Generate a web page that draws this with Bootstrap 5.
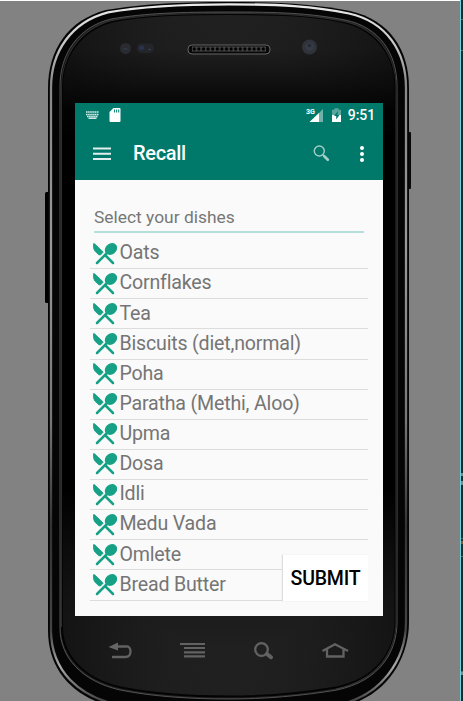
<!DOCTYPE html>
<html lang="en">
<head>
<meta charset="utf-8">
<meta name="viewport" content="width=device-width, initial-scale=1">
<title>Recall</title>
<link href="https://cdn.jsdelivr.net/npm/bootstrap@5.3.0/dist/css/bootstrap.min.css" rel="stylesheet">
<style>
body{background:#828282;font-family:Roboto,"Liberation Sans",sans-serif;width:463px;height:701px}
.stage{width:463px;height:701px;border-top:1px solid #fff}
.phone-art{position:absolute;left:0;top:-1px;z-index:0}
.earpiece{height:102px}
.screen{width:308px;height:513px;margin-left:75px;background:#fafafa}
.topbar{background:#00796b;height:77px;color:#fff}
.statusbar{height:24px;padding:0 8px 0 11px}
.clock{font-size:14px;font-weight:500;line-height:24px;letter-spacing:-.1px;margin-left:7px}
.actions{height:53px;padding:0 14px 0 18px}
.app-title{font-size:20px;font-weight:500;line-height:53px;margin-left:22px;letter-spacing:-.3px}
.search-glyph{margin-right:25px}
.prompt{margin:25px 19px 0;height:28px;border-bottom:2px solid #b5dfd9;font-size:17.4px;line-height:25px;color:#777;white-space:nowrap}
.dishes{margin:6px 15px 0;padding:0}
.dish{height:30.13px;border-bottom:1.5px solid #dcdcdc;padding-left:3px;font-size:19.6px;letter-spacing:-.18px;line-height:28px;color:#757575;white-space:nowrap}
.dish svg{margin-right:2.4px;flex:none}
.dish span{padding-bottom:.4px}
.submit-btn{position:absolute;left:208px;top:452px;width:85px;height:46px;background:#fff;border:0;border-radius:0;color:#000;font-size:19.5px;letter-spacing:-.2px;font-weight:500;padding:1px 0 0;line-height:46px;box-shadow:-1px 0 1px #ddd}
.keys{height:84px;padding:25px 0 0 108px}
</style>
<script src="https://cdn.jsdelivr.net/npm/bootstrap@5.3.0/dist/js/bootstrap.bundle.min.js"></script>
</head>
<body class="m-0 overflow-hidden">
<svg width="0" height="0" class="position-absolute"><defs>
<symbol id="utensils" viewBox="0 0 24 22"><g fill="#16a085" stroke="#16a085"><path d="M4 20 15.500 8.500" stroke-width="2.500" stroke-linecap="round"/><path d="M12.500 12.500 20 20" stroke-width="2.500" stroke-linecap="round"/><path d="M.400.800Q1 .400 1.600.800L10.200 9 7.500 12 5.800 11.800 1.600 7.800Q-.200 4.500.400.800Z" stroke-width=".800"/><ellipse cx="18" cy="6" rx="6.600" ry="5.400" transform="rotate(-38 18 6)" stroke="none"/></g></symbol>
</defs></svg>
<main class="stage position-relative">
<svg class="phone-art" width="463" height="701" viewBox="0 0 463 701">
<defs>
<linearGradient id="rim" x1="0" y1="0" x2="0" y2="701" gradientUnits="userSpaceOnUse"><stop offset="0" stop-color="#eee"/><stop offset=".06" stop-color="#c8c8c8"/><stop offset=".12" stop-color="#888"/><stop offset=".35" stop-color="#999"/><stop offset=".6" stop-color="#777"/><stop offset=".75" stop-color="#333"/><stop offset=".9" stop-color="#444"/><stop offset=".95" stop-color="#aaa"/><stop offset="1" stop-color="#444"/></linearGradient>
<linearGradient id="face" x1="0" y1="0" x2="0" y2="701" gradientUnits="userSpaceOnUse"><stop offset="0" stop-color="#272727"/><stop offset=".07" stop-color="#1f1f1f"/><stop offset=".16" stop-color="#030303"/><stop offset=".2" stop-color="#000"/><stop offset=".7" stop-color="#000"/><stop offset=".88" stop-color="#1c1c1c"/><stop offset="1" stop-color="#262626"/></linearGradient>
<radialGradient id="vig" cx="229" cy="350" r="400" gradientUnits="userSpaceOnUse" gradientTransform="translate(229 0) scale(.6 1) translate(-229 0)"><stop offset=".75" stop-color="#000" stop-opacity="0"/><stop offset="1" stop-color="#000" stop-opacity=".35"/></radialGradient>
<pattern id="mesh" x="192" y="46.500" width="4.600" height="5" patternUnits="userSpaceOnUse"><rect width="4.600" height="5" fill="#484848"/><circle cx="2.300" cy="2.500" r="1.700" fill="#000"/></pattern>
</defs>
<rect x="45" y="192" width="6" height="111" rx="1.500" fill="#000"/><rect x="407" y="132" width="4" height="57" rx="1" fill="#0a0a0a"/>
<path d="M48 630V88C48 50 68 20 106 10C142 4 180 2 229 2S315 4 350 11C390 20 409 50 409 88V622C409 660 385 701 332 709H124C75 701 48 672 48 630Z" fill="#050505"/>
<path d="M51 630V88C51 52 71 22 108 12.300C144 6 180 4.300 229 4.300S314 6 349 13.500C387 22 406 52 406 88V622C406 658 383 698 332 706H124C78 698 51 670 51 630Z" fill="none" stroke="url(#rim)" stroke-width="2.300"/>
<path d="M60 628V86C60 54 78 27 111 19C146 13 181 12 229 12S310 13 345 20C380 27 397 54 397 86V622C397 653 379 681 337 690C301 696 264 699 229 699S155 697 120 690C81 681 60 657 60 628Z" fill="url(#face)" stroke="#515151" stroke-width="1"/>
<path d="M62 627V87C62 56 81 30 112 21.500C147 15 181 14 229 14S309 15 343 22C376 29 395.500 56 395.500 87V621C395.500 651 377 679 336 687.500C301 693.500 264 696.500 229 696.500S156 694.500 121 687.500C83 679 62 655 62 627Z" fill="url(#vig)" stroke="#030303" stroke-width="2"/>
<path d="M61.500 627V87C61.500 56 80 29 112 20.500C147 14.500 181 13.500 229 13.500S309 14.500 344 21.500C377 28.500 396 56 396 87V621C396 651 378 680 336 689" fill="none" stroke="#4a4a4a" stroke-width=".6"/>
<circle cx="125.500" cy="48.500" r="5.500" fill="#2a2b31"/><rect x="137" y="43.500" width="17" height="9.500" rx="4.500" fill="#24252b"/><rect x="139" y="45.500" width="5" height="4.500" rx="1.500" fill="#28334a"/><path d="M148 49.500h3M123.500 49h4" stroke="#394052"/>
<rect x="188" y="45" width="82" height="9" rx="4" fill="#090909" stroke="#666" stroke-width="1"/><rect x="192" y="46.500" width="74" height="5" fill="url(#mesh)"/>
<circle cx="309.500" cy="47" r="7.500" fill="#30333a"/><circle cx="309.500" cy="46.500" r="4.300" fill="#373b46"/><circle cx="309.500" cy="45.500" r="1.800" fill="#252a34"/>
<path d="M461 0h2v701h-2z" fill="#20282a"/><path d="M460 0h1v701h-1z" fill="#6fd3db"/><path d="M461 19.500h2M461 50.500h2M461 538.500h2M461 556.500h2M461 671.500h2" stroke="#55605f"/><path d="M461 473h2v3h-2zM461 481h2v4h-2zM461 672h2v3h-2z" fill="#7e898a"/><path d="M461 541h2v3h-2z" fill="#8d5337"/>
</svg>
<div class="earpiece"></div>
<section class="screen position-relative overflow-hidden">
<header class="topbar">
<div class="statusbar d-flex align-items-center">
<svg width="13" height="8" viewBox="0 0 13 8"><path d="M0 1h13M0 3.500h13M1 5.500h11" stroke="#d9ebe8" stroke-width="1.700" stroke-dasharray="1.600 .5"/><path d="M2.500 7.200h8" stroke="#e8f3f1" stroke-width="1.400"/></svg>
<svg class="ms-2" width="16" height="16" viewBox="0 0 16 16"><path d="M6.500 1h6q1 0 1 1v12q0 1-1 1h-9q-1 0-1-1V5Z" fill="#fff"/><path d="M7.500 2.500v3M9.600 2.500v3M11.700 2.500v3" stroke="#16897b" stroke-width="1.100"/></svg>
<div class="ms-auto d-flex align-items-center">
<svg width="18" height="16" viewBox="0 0 18 16"><path d="M17 2v13H4Z" fill="#70b2aa"/><path d="M13 6v9H3.500Z" fill="#fff"/><text x="0" y="6.800" fill="#fff" font-size="7.500" font-weight="700" textLength="9" lengthAdjust="spacingAndGlyphs">3G</text></svg>
<svg class="ms-2" width="9" height="14" viewBox="0 0 9 14"><path d="M0 1.800h2.500V.200h4v1.600H9V8H0Z" fill="#59a69c"/><path d="M0 7h9v7H0Z" fill="#fff"/><path d="M6 3 2 8h2.200v3.500L7.500 7H5.300Z" fill="#00796b"/></svg>
<span class="clock">9:51</span></div>
</div>
<div class="actions d-flex align-items-center">
<svg width="18" height="14" viewBox="0 0 18 14"><path d="M0 1.500h18M0 6.800h18M0 12h18" stroke="#e2efee" stroke-width="2"/></svg>
<span class="app-title">Recall</span>
<svg class="ms-auto search-glyph" width="17" height="17" viewBox="0 0 17 17" fill="none" stroke="#a3cec8"><circle cx="6.300" cy="6" r="5" stroke-width="1.400"/><path d="m9.800 9.800 1.500 1.500" stroke-width="1.500"/><path d="m11.300 11.300 3.500 3.500" stroke-width="2.700" stroke-linecap="round"/></svg>
<svg class="menu-glyph" width="14" height="18" viewBox="0 0 14 18" fill="#fff"><circle cx="7" cy="3" r="2"/><circle cx="7" cy="9" r="2"/><circle cx="7" cy="15" r="2"/></svg>
</div>
</header>
<div class="prompt">Select your dishes</div>
<ul class="dishes list-unstyled">
<li class="dish d-flex align-items-center"><svg width="24" height="22"><use href="#utensils"/></svg><span>Oats</span></li>
<li class="dish d-flex align-items-center"><svg width="24" height="22"><use href="#utensils"/></svg><span>Cornflakes</span></li>
<li class="dish d-flex align-items-center"><svg width="24" height="22"><use href="#utensils"/></svg><span>Tea</span></li>
<li class="dish d-flex align-items-center"><svg width="24" height="22"><use href="#utensils"/></svg><span>Biscuits (diet,normal)</span></li>
<li class="dish d-flex align-items-center"><svg width="24" height="22"><use href="#utensils"/></svg><span>Poha</span></li>
<li class="dish d-flex align-items-center"><svg width="24" height="22"><use href="#utensils"/></svg><span>Paratha (Methi, Aloo)</span></li>
<li class="dish d-flex align-items-center"><svg width="24" height="22"><use href="#utensils"/></svg><span>Upma</span></li>
<li class="dish d-flex align-items-center"><svg width="24" height="22"><use href="#utensils"/></svg><span>Dosa</span></li>
<li class="dish d-flex align-items-center"><svg width="24" height="22"><use href="#utensils"/></svg><span>Idli</span></li>
<li class="dish d-flex align-items-center"><svg width="24" height="22"><use href="#utensils"/></svg><span>Medu Vada</span></li>
<li class="dish d-flex align-items-center"><svg width="24" height="22"><use href="#utensils"/></svg><span>Omlete</span></li>
<li class="dish d-flex align-items-center"><svg width="24" height="22"><use href="#utensils"/></svg><span>Bread Butter</span></li>
</ul>
<button type="button" class="btn submit-btn">SUBMIT</button>
</section>
<nav class="keys position-relative">
<svg width="245" height="20" viewBox="108 641 245 20" class="d-block" fill="none" stroke="#626262" stroke-width="2.300"><path d="M112 657h13.500q5 0 5-5.500t-5-5H117"/><path d="m108.500 647 9.500-4.500v8Z" fill="#666" stroke="none"/><path d="M180 644h25M184 648h21M184 652.300h21M184 656.300h21" stroke-width="2.200"/><circle cx="261.500" cy="649.500" r="6.300"/><path d="m267 654 4 3.200" stroke-width="4" stroke-linecap="round"/><path d="m322.500 651 12.500-6.800 13 6.800M327 649v7.500h16.500V649" stroke-width="2.300"/></svg>
</nav>
</main>
</body>
</html>
